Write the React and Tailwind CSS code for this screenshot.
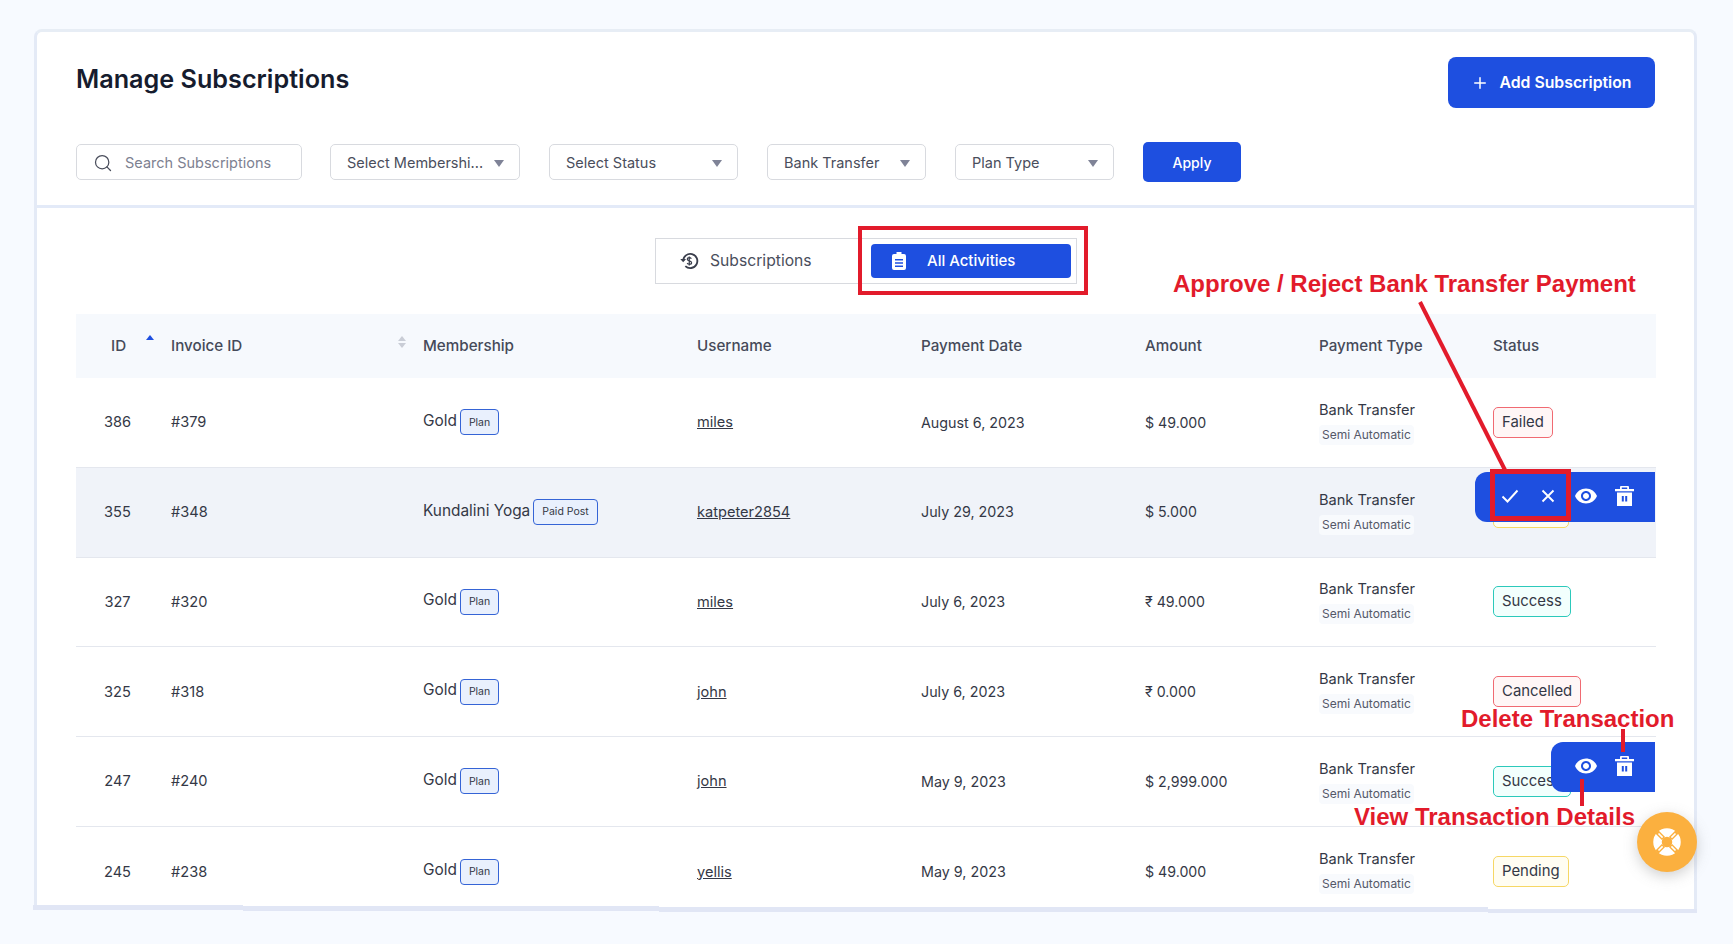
import React from 'react';
import { Plus, Search } from 'lucide-react';

const rows = [
  { id: 386, invoice: '#379', membership: 'Gold', tag: 'Plan', user: 'miles', date: 'August 6, 2023', amount: '$ 49.000', status: 'Failed' },
  { id: 355, invoice: '#348', membership: 'Kundalini Yoga', tag: 'Paid Post', user: 'katpeter2854', date: 'July 29, 2023', amount: '$ 5.000', status: 'Pending', active: true },
  { id: 327, invoice: '#320', membership: 'Gold', tag: 'Plan', user: 'miles', date: 'July 6, 2023', amount: '₹ 49.000', status: 'Success' },
  { id: 325, invoice: '#318', membership: 'Gold', tag: 'Plan', user: 'john', date: 'July 6, 2023', amount: '₹ 0.000', status: 'Cancelled' },
  { id: 247, invoice: '#240', membership: 'Gold', tag: 'Plan', user: 'john', date: 'May 9, 2023', amount: '$ 2,999.000', status: 'Success' },
  { id: 245, invoice: '#238', membership: 'Gold', tag: 'Plan', user: 'yellis', date: 'May 9, 2023', amount: '$ 49.000', status: 'Pending' },
];

const statusStyles = {
  Failed: 'bg-[#fff6f6] border-[#f06a72]',
  Cancelled: 'bg-[#fff6f6] border-[#f06a72]',
  Success: 'bg-[#f2fffd] border-[#2cc9bb]',
  Pending: 'bg-[#fffdf2] border-[#f6d765]',
};

const gridCols = 'grid grid-cols-[95px_252px_274px_224px_224px_174px_174px_163px]';

const EyeIcon = () => (
  <svg width="22" height="16" viewBox="1 4 22 16" fill="white">
    <path d="M12 4.5C7 4.5 2.73 7.61 1 12c1.73 4.39 6 7.5 11 7.5s9.27-3.11 11-7.5c-1.73-4.39-6-7.5-11-7.5zM12 17c-2.76 0-5-2.24-5-5s2.24-5 5-5 5 2.24 5 5-2.24 5-5 5zm0-8c-1.66 0-3 1.34-3 3s1.34 3 3 3 3-1.34 3-3-1.34-3-3-3z" />
  </svg>
);

const TrashIcon = () => (
  <svg width="19" height="20" viewBox="0 0 19 20" fill="white">
    <path d="M6 0h7a1 1 0 0 1 1 1v2h5v2.2H0V3h5V1a1 1 0 0 1 1-1Zm.8 1.5V3h5.4V1.5Z" fillRule="evenodd" />
    <path d="M2 6.5h15V20H2ZM6.8 10v5.5h2V10ZM10.2 10v5.5h2V10Z" fillRule="evenodd" />
  </svg>
);

const ActionBar = ({ approve, className }) => (
  <div className={`absolute flex h-[50px] items-center justify-end rounded-l-[12px] bg-[#1e4fe0] ${className}`}>
    {approve && (
      <>
        <svg className="absolute left-[26px] top-[17px]" width="18" height="14" viewBox="0 0 18 14" fill="none">
          <path d="M1.5 7.5L6.5 12.5L16.5 1.5" stroke="white" strokeWidth="1.9" />
        </svg>
        <svg className="absolute left-[66px] top-[17px]" width="14" height="14" viewBox="0 0 14 14" fill="none">
          <path d="M1.5 1.5L12.5 12.5M12.5 1.5L1.5 12.5" stroke="white" strokeWidth="1.9" />
        </svg>
      </>
    )}
    <div className="absolute right-[58px] top-[16px]"><EyeIcon /></div>
    <div className="absolute right-[21px] top-[14px]"><TrashIcon /></div>
  </div>
);

const FilterSelect = ({ label, width }) => (
  <div className={`flex h-[36px] items-center justify-between rounded-[5px] border border-[#d8dadf] bg-white pl-[16px] pr-[15px] pt-[2px] text-[14.5px] text-[#4a4e5c] ${width}`}>
    <span>{label}</span>
    <span className="h-0 w-0 border-x-[5px] border-t-[7px] border-x-transparent border-t-[#7f8397]" />
  </div>
);

const App = () => {
  return (
    <div className="relative h-[944px] w-[1733px] overflow-hidden bg-[#f7faff] pt-[29px] pl-[34px] font-['Inter','Liberation_Sans',sans-serif] text-[#343846]">
      <div className="h-[880px] w-[1663px] overflow-hidden rounded-t-[8px] border-x-[3px] border-t-[3px] border-x-[#e4eaf6] border-t-[#e7edf5] bg-white">
        <div className="h-[176px] border-b-[3px] border-[#e3eaf8] pl-[39px] pr-[39px]">
          <div className="flex items-start justify-between">
            <h1 className="mt-[29px] text-[25.2px] font-semibold leading-[36px] text-[#161c2e]">Manage Subscriptions</h1>
            <button className="mt-[25px] flex h-[51px] w-[207px] items-center justify-center gap-[10px] rounded-[8px] bg-[#1e4fe0] text-[15.8px] font-semibold text-white">
              <Plus size={18} strokeWidth={2} />
              Add Subscription
            </button>
          </div>
          <div className="mt-[34px] flex items-center">
            <div className="flex h-[36px] w-[226px] items-center rounded-[5px] border border-[#d8dadf] pl-[16px] pt-[1px] text-[14.5px] text-[#7d8191]">
              <Search size={20} strokeWidth={1.5} className="text-[#4a4e5c]" />
              <span className="ml-[12px]">Search Subscriptions</span>
            </div>
            <div className="ml-[28px] flex gap-[29px]">
              <FilterSelect label="Select Membershi..." width="w-[190px]" />
              <FilterSelect label="Select Status" width="w-[189px]" />
              <FilterSelect label="Bank Transfer" width="w-[159px]" />
              <FilterSelect label="Plan Type" width="w-[159px]" />
            </div>
            <button className="ml-[29px] h-[40px] w-[98px] rounded-[5px] bg-[#1e4fe0] text-[14px] font-medium text-white">Apply</button>
          </div>
        </div>

        <div className="pl-[39px]">
          <div className="flex justify-center pr-[38px] pt-[30px]">
            <div className="flex h-[46px] w-[422px] items-center border border-[#d8dadf]">
              <div className="flex w-[215px] items-center pl-[23px] text-[15.7px] text-[#4a4e5c]">
                <svg width="20" height="20" viewBox="0 0 24 24" fill="none" stroke="#3a3e4c" strokeWidth="2.2">
                  <path d="M5 12a8.5 8.5 0 1 1 2.6 6.1" />
                  <path d="M1.5 9.5L5 13.5L8.5 9.5" fill="#3a3e4c" stroke="none" />
                  <path d="M14.8 9.3c-.5-.9-1.4-1.3-2.5-1.3-1.4 0-2.4.7-2.4 1.9 0 2.6 5.2 1.3 5.2 4.1 0 1.2-1.1 1.9-2.6 1.9-1.2 0-2.2-.5-2.7-1.4M12.3 6.5v11" strokeWidth="1.5" />
                </svg>
                <span className="ml-[11px]">Subscriptions</span>
              </div>
              <div className="flex h-[34px] w-[200px] items-center rounded-[4px] bg-[#1e4fe0] pl-[21px] text-[15px] font-medium text-white">
                <svg width="14" height="18" viewBox="0 0 14 18" fill="white">
                  <path fillRule="evenodd" d="M4.5 0h5v2H12a2 2 0 0 1 2 2v12a2 2 0 0 1-2 2H2a2 2 0 0 1-2-2V4a2 2 0 0 1 2-2h2.5ZM3 7v1.5h8V7Zm0 3.2v1.5h8v-1.5Zm0 3.2v1.5h8v-1.5Z" />
                </svg>
                <span className="ml-[21px]">All Activities</span>
              </div>
            </div>
          </div>

          <div className="mt-[30px] w-[1580px]">
            <div className={`${gridCols} h-[64px] items-center bg-[#f6f9fd] text-[15.2px] font-medium text-[#454a59]`}>
              <div className="relative pl-[35px]">
                ID
                <span className="absolute left-[70px] top-[0px] h-0 w-0 border-x-[4px] border-b-[5px] border-x-transparent border-b-[#1e4fe0]" />
              </div>
              <div className="relative">
                Invoice ID
                <span className="absolute left-[227px] top-[1px] h-0 w-0 border-x-[4px] border-b-[5px] border-x-transparent border-b-[#c9cdd6]" />
                <span className="absolute left-[227px] top-[8px] h-0 w-0 border-x-[4px] border-t-[5px] border-x-transparent border-t-[#c9cdd6]" />
              </div>
              <div>Membership</div>
              <div>Username</div>
              <div>Payment Date</div>
              <div>Amount</div>
              <div>Payment Type</div>
              <div>Status</div>
            </div>

            {rows.map((row, i) => (
              <div
                key={row.id}
                className={`${gridCols} h-[89.75px] items-center text-[14.6px] ${row.active ? 'bg-[#f0f3f9]' : ''} ${i < 5 ? 'border-b border-[#e4e7ee]' : ''}`}
              >
                <div className="w-[83px] pt-[2px] text-center">{row.id}</div>
                <div className="pt-[2px]">{row.invoice}</div>
                <div className="flex items-center gap-[3px]">
                  <span className="relative top-[-2px] text-[15.4px]">{row.membership}</span>
                  <span className="flex h-[26px] items-center rounded-[4px] border border-[#3564d6] bg-[#e9f0fd] px-[8px] text-[10.5px]">{row.tag}</span>
                </div>
                <div className="pt-[2px]"><span className="underline">{row.user}</span></div>
                <div className="text-[14.3px]">{row.date}</div>
                <div className="text-[14.2px]">{row.amount}</div>
                <div className="flex flex-col items-start">
                  <span className="leading-[20px]">Bank Transfer</span>
                  <span className="mt-[5px] rounded-[4px] bg-[#f8fafd] px-[3px] text-[12px] leading-[20px] text-[#545868]">Semi Automatic</span>
                </div>
                <div>
                  <span className={`inline-block rounded-[5px] border px-[8px] text-[14.9px] leading-[29px] ${statusStyles[row.status]}`}>{row.status}</span>
                </div>
              </div>
            ))}
          </div>
        </div>
      </div>

      {/* stepped bottom edge of the card */}
      <div className="absolute left-[33px] top-[905px] h-[5px] w-[210px] bg-[#e1e6f5]" />
      <div className="absolute left-[243px] top-[906px] h-[5px] w-[416px] bg-[#e1e6f5]" />
      <div className="absolute left-[659px] top-[907px] h-[5px] w-[829px] bg-[#e1e6f5]" />
      <div className="absolute left-[1488px] top-[909px] h-[4px] w-[209px] bg-[#e1e6f5]" />

      {/* row hover action bars */}
      <ActionBar approve className="left-[1475px] top-[472px] w-[180px]" />
      <ActionBar className="left-[1551px] top-[742px] w-[104px]" />

      {/* annotations */}
      <div className="absolute left-[858px] top-[226px] h-[69px] w-[230px] border-[4px] border-[#e21b2b]" />
      <div className="absolute left-[1490px] top-[469px] h-[52px] w-[81px] border-[5px] border-[#e21b2b]" />
      <svg className="absolute left-[1400px] top-[290px]" width="130" height="190" viewBox="0 0 130 190" fill="none">
        <path d="M20 12L105 180" stroke="#e21b2b" strokeWidth="4" />
      </svg>
      <div className="absolute left-[1621px] top-[729px] h-[23px] w-[4px] bg-[#e21b2b]" />
      <div className="absolute left-[1580px] top-[779px] h-[27px] w-[4px] bg-[#e21b2b]" />
      <span className="absolute left-[1173px] top-[268px] whitespace-nowrap font-['Liberation_Sans',sans-serif] text-[24px] font-bold leading-[32px] text-[#e21b2b]">Approve / Reject Bank Transfer Payment</span>
      <span className="absolute left-[1461px] top-[703px] whitespace-nowrap font-['Liberation_Sans',sans-serif] text-[24px] font-bold leading-[32px] text-[#e21b2b]">Delete Transaction</span>
      <span className="absolute left-[1354px] top-[801px] whitespace-nowrap font-['Liberation_Sans',sans-serif] text-[24px] font-bold leading-[32px] text-[#e21b2b]">View Transaction Details</span>

      {/* support button */}
      <div className="absolute left-[1637px] top-[812px] flex h-[60px] w-[60px] items-center justify-center rounded-full bg-[#fbb03f] shadow-[0_4px_14px_rgba(120,120,120,0.35)]">
        <svg width="30" height="30" viewBox="0 0 30 30" fill="none">
          <circle cx="15" cy="15" r="9.5" stroke="white" strokeWidth="8.5" />
          <path d="M5 5L11.5 11.5M25 5L18.5 11.5M5 25L11.5 18.5M25 25L18.5 18.5" stroke="#fbb03f" strokeWidth="4.5" />
          <path d="M6.5 6.5L10.6 10.6M23.5 6.5L19.4 10.6M6.5 23.5L10.6 19.4M23.5 23.5L19.4 19.4" stroke="white" strokeWidth="1.7" />
        </svg>
      </div>
    </div>
  );
};

export default App;
